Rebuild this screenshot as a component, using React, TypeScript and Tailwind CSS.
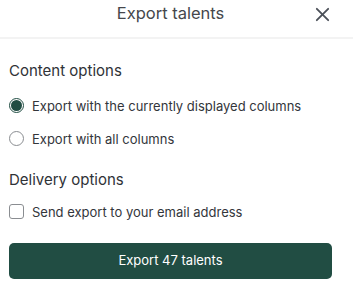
import React, { useState } from 'react'

function App(): React.JSX.Element {
  const [content, setContent] = useState<'displayed' | 'all'>('displayed')
  const [sendEmail, setSendEmail] = useState(false)

  return (
    <div className="w-[353px] h-[291px] bg-white text-[#3a3d42] font-['Inter','Liberation_Sans',sans-serif]">
      {/* Header */}
      <header className="relative flex items-center justify-center h-[39px] pb-[11px] border-b-2 border-[#f3f3f3]">
        <h2 className="text-[16.5px] leading-[22px] text-[#45474c] ml-[-12px]">Export talents</h2>
        <button className="absolute right-[22px] top-[6px] text-[#4b5058]">
          <svg width="17" height="17" viewBox="0 0 24 24" fill="none" stroke="currentColor" strokeWidth="2.6" strokeLinecap="round">
            <path d="M4 4 L20 20" />
            <path d="M20 4 L4 20" />
          </svg>
        </button>
      </header>

      <main className="px-[9px] pt-[22px]">
        {/* Content options */}
        <h3 className="text-[15px] leading-[20px] text-[#2f3237]">Content options</h3>
        <div className="flex flex-col gap-[18px] mt-[17px]">
          <label className="flex items-center gap-[8px] h-[15px] cursor-pointer" onClick={() => setContent('displayed')}>
            <span className="flex items-center justify-center w-[15px] h-[15px] rounded-full border border-[#214d43]">
              {content === 'displayed' && <span className="w-[11px] h-[11px] rounded-full bg-[#214d43]" />}
            </span>
            <span className="text-[13px] leading-[18px] text-[#33363b]">Export with the currently displayed columns</span>
          </label>
          <label className="flex items-center gap-[8px] h-[15px] cursor-pointer" onClick={() => setContent('all')}>
            <span className={`flex items-center justify-center w-[15px] h-[15px] rounded-full border ${content === 'all' ? 'border-[#214d43]' : 'border-[#8a8d91]'}`}>
              {content === 'all' && <span className="w-[11px] h-[11px] rounded-full bg-[#214d43]" />}
            </span>
            <span className="text-[13px] leading-[18px] text-[#33363b]">Export with all columns</span>
          </label>
        </div>

        {/* Delivery options */}
        <h3 className="text-[15px] leading-[20px] text-[#2f3237] mt-[24px]">Delivery options</h3>
        <label className="flex items-center gap-[8px] h-[15px] mt-[14px] cursor-pointer" onClick={() => setSendEmail(!sendEmail)}>
          <span className={`w-[15px] h-[15px] rounded-[3px] border ${sendEmail ? 'bg-[#214d43] border-[#214d43]' : 'border-[#8a8d91]'}`} />
          <span className="text-[13px] leading-[18px] text-[#33363b]">Send export to your email address</span>
        </label>

        <button className="mt-[24px] w-[323px] h-[36px] rounded-[5px] bg-[#214d43] text-white text-[13px]">
          Export 47 talents
        </button>
      </main>
    </div>
  )
}

export default App
